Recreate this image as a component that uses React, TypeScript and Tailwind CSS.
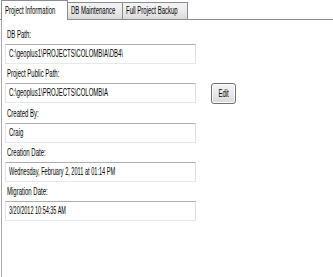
import React from 'react';

const Txt: React.FC<{ children: React.ReactNode; center?: boolean; sx?: string }> = ({
  children,
  center,
  sx = 'scale-x-[0.6]',
}) => (
  <span className={`inline-block whitespace-nowrap ${sx} ${center ? 'origin-center' : 'origin-left'}`}>
    {children}
  </span>
);

const Field: React.FC<{ label: string; value: string; sx?: string; action?: React.ReactNode }> = ({
  label,
  value,
  sx,
  action,
}) => (
  <div>
    <div className="h-[19px] flex items-center pl-[2px] text-black">
      <Txt>{label}</Txt>
    </div>
    <div className="flex items-start">
      <div className="w-[191px] h-[20px] flex items-center pl-[3px] border border-[#e3e9ef] border-t-[#abadb3] border-l-[#e2e3ea] border-r-[#dbdfe6] bg-white text-black overflow-hidden">
        <Txt sx={sx}>{value}</Txt>
      </div>
      {action}
    </div>
  </div>
);

const App: React.FC = () => {
  return (
    <div
      className="w-[333px] h-[277px] bg-white overflow-hidden text-[10px] leading-none"
      style={{ fontFamily: '"Liberation Sans", Arial, sans-serif' }}
    >
      {/* tab strip */}
      <div className="flex items-end h-[20px] border-b border-[#898c95] pl-[1px]">
        <div className="relative top-px w-[67px] h-[20px] flex items-center pl-[3px] bg-white border border-b-0 border-[#898c95] z-10">
          <Txt>Project Information</Txt>
        </div>
        <div className="w-[55px] h-[17px] flex items-center pl-[3px] border border-b-0 border-l-0 border-[#898c95] bg-linear-to-b from-[#f3f3f3] via-[#ebebeb] to-[#d9d9d9]">
          <Txt>DB Maintenance</Txt>
        </div>
        <div className="w-[65px] h-[17px] flex items-center pl-[3px] border border-b-0 border-l-0 border-[#898c95] bg-linear-to-b from-[#f3f3f3] via-[#ebebeb] to-[#d9d9d9]">
          <Txt>Full Project Backup</Txt>
        </div>
      </div>

      {/* panel */}
      <div className="ml-[1px] h-[257px] border-l border-[#a8a8a8] pl-[3px] pt-[5px]">
        <Field label="DB Path:" value="C:\geoplus1\PROJECTS\COLOMBIA\DB4\" />
        <Field
          label="Project Public Path:"
          value="C:\geoplus1\PROJECTS\COLOMBIA"
          action={
            <button className="ml-[15px] w-[25px] h-[21px] flex items-center justify-center rounded-[3px] border border-[#707070] bg-linear-to-b from-[#f6f6f6] to-[#dadada] text-black shadow-[inset_0_0_0_1px_#fcfcfc]">
              <Txt center>Edit</Txt>
            </button>
          }
        />
        <Field label="Created By:" value="Craig" />
        <Field
          label="Creation Date:"
          value="Wednesday, February 2, 2011 at 01:14 PM"
          sx="scale-x-[0.56]"
        />
        <Field label="Migration Date:" value="3/20/2012 10:54:35 AM" sx="scale-x-[0.55]" />
      </div>
    </div>
  );
};

export default App;
